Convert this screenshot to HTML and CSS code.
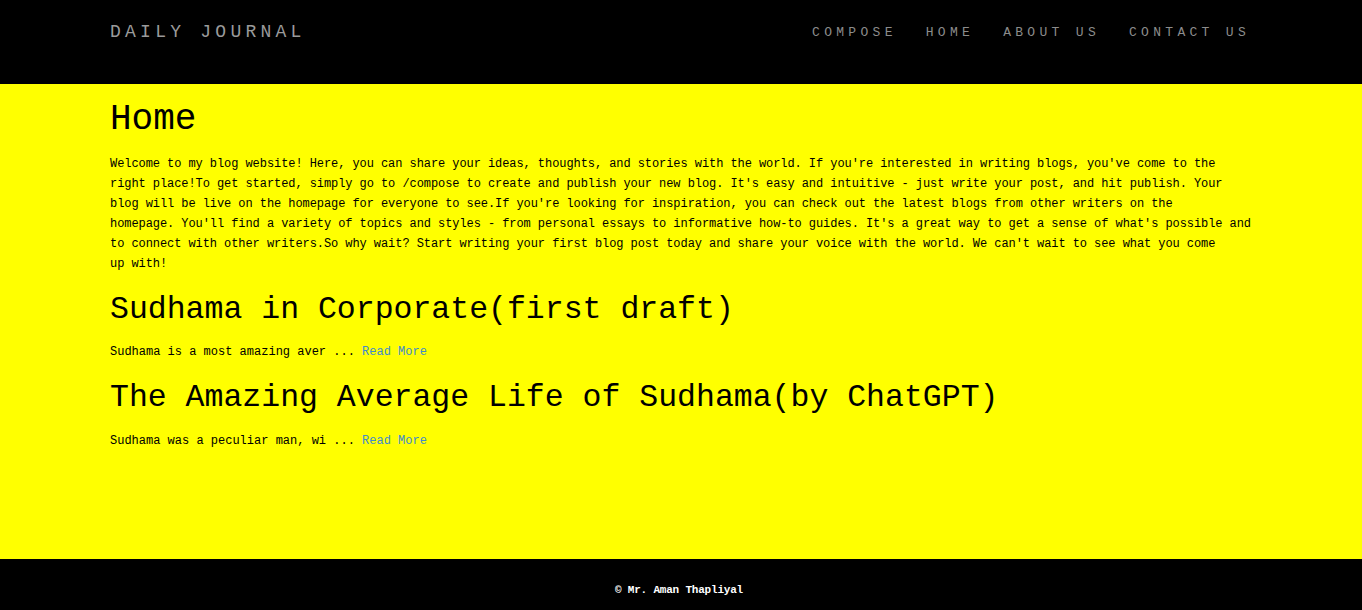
FILE: index.html
```html
<!DOCTYPE html>
<html lang="en">
<head>
<meta charset="utf-8">
<title>Daily Journal</title>
<link rel="stylesheet" href="styles.css">
</head>
<body>
<div class="page">
  <header class="navbar">
    <div class="container nav-inner">
      <a class="brand" href="#">DAILY JOURNAL</a>
      <nav class="nav-links">
        <a href="#">COMPOSE</a>
        <a href="#">HOME</a>
        <a href="#">ABOUT US</a>
        <a href="#">CONTACT US</a>
      </nav>
    </div>
  </header>
  <main class="main">
    <div class="container">
      <h1 class="page-title">Home</h1>
      <p class="intro">Welcome to my blog website! Here, you can share your ideas, thoughts, and stories with the world. If you're interested in writing blogs, you've come to the<br>right place!To get started, simply go to /compose to create and publish your new blog. It's easy and intuitive - just write your post, and hit publish. Your<br>blog will be live on the homepage for everyone to see.If you're looking for inspiration, you can check out the latest blogs from other writers on the<br>homepage. You'll find a variety of topics and styles - from personal essays to informative how-to guides. It's a great way to get a sense of what's possible and<br>to connect with other writers.So why wait? Start writing your first blog post today and share your voice with the world. We can't wait to see what you come<br>up with!</p>
      <article class="post">
        <h2 class="post-title">Sudhama in Corporate(first draft)</h2>
        <p class="post-excerpt">Sudhama is a most amazing aver ... <a href="#">Read More</a></p>
      </article>
      <article class="post">
        <h2 class="post-title">The Amazing Average Life of Sudhama(by ChatGPT)</h2>
        <p class="post-excerpt">Sudhama was a peculiar man, wi ... <a href="#">Read More</a></p>
      </article>
    </div>
  </main>
  <footer class="footer">
    <p class="copy">© Mr. Aman Thapliyal</p>
  </footer>
</div>
</body>
</html>
```

FILE: styles.css
```css
* { box-sizing: border-box; }

html, body {
  margin: 0;
  padding: 0;
  height: 100%;
}

body {
  font-family: "Liberation Mono", "DejaVu Sans Mono", monospace;
  color: #000;
  background: #000;
}

.page {
  min-height: 100vh;
  display: flex;
  flex-direction: column;
}

.container {
  width: 1142px;
  margin: 0 auto;
}

.navbar {
  background: #000;
  height: 84px;
  padding-bottom: 21px;
  display: flex;
}

.nav-inner {
  display: flex;
  align-items: center;
  justify-content: space-between;
}

.brand {
  color: #9a9a9a;
  text-decoration: none;
  font-size: 18px;
  letter-spacing: 4.25px;
  margin-top: 1px;
}

.nav-links {
  display: flex;
  gap: 29px;
  margin-top: 2px;
  margin-right: 2px;
}

.nav-links a {
  color: #8c8c8c;
  text-decoration: none;
  font-size: 13px;
  letter-spacing: 4.3px;
}

.main {
  flex: 1;
  background: #ffff00;
  padding-top: 16px;
}

.page-title {
  margin: 0 0 14px;
  font-size: 36px;
  line-height: 1.1;
  font-weight: normal;
}

.intro {
  margin: 0;
  font-size: 12px;
  letter-spacing: -0.07px;
  line-height: 20px;
  white-space: nowrap;
}

.post-title {
  margin: 19px 0 15px;
  font-size: 31.5px;
  line-height: 1.1;
  font-weight: normal;
}

.post-excerpt {
  margin: 0;
  font-size: 12px;
  line-height: 20px;
}

.post-excerpt a {
  color: #428bca;
  text-decoration: none;
}

.footer {
  background: #000;
  height: 51px;
  display: flex;
  justify-content: center;
  padding-top: 25px;
}

.copy {
  margin: 0;
  margin-right: 4px;
  color: #fff;
  font-size: 11px;
  font-weight: bold;
  letter-spacing: -0.2px;
  line-height: 12px;
}
```
